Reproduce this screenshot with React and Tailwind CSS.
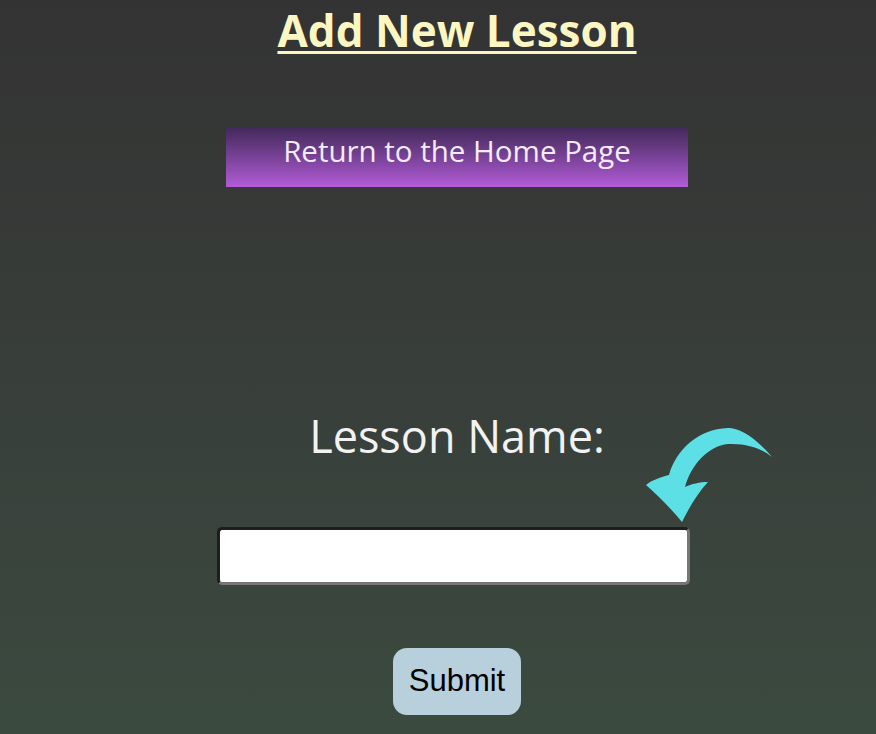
export default function App() {
  return (
    <div className="relative w-[876px] h-[734px] overflow-hidden bg-gradient-to-b from-[#333333] via-[#383e3a] to-[#3b4a3f]" style={{ fontFamily: '"Open Sans", sans-serif' }}>
      <div className="flex flex-col items-center pl-[38px]">
        <h1 className="text-[44px] leading-[60px] -mb-[4px] font-bold text-[#fcf7c2] underline decoration-[3px] underline-offset-[4px]">Add New Lesson</h1>
        <button className="mt-[71px] w-[462px] h-[60px] bg-gradient-to-b from-[#42295a] to-[#b35cd8] text-[#f3ecf8] text-[29.5px] leading-[46px] flex items-start justify-center pt-[1px]">
          Return to the Home Page
        </button>
        <div className="mt-[221px] text-[45px] leading-[56px] text-[#f2f2f2]">Lesson Name:</div>
        <input className="mt-[63px] -ml-[7px] w-[473px] h-[58px] bg-white rounded-[5px] border-t-[3px] border-l-[3px] border-r-[3px] border-b-[3px] border-t-[#1e1e1e] border-l-[#1e1e1e] border-r-[#767676] border-b-[#767676] outline-none" />
        <button className="mt-[63px] w-[128px] h-[67px] rounded-[14px] bg-[#b8d0dc] text-black text-[31px]" style={{ fontFamily: '"Liberation Sans", Arial, sans-serif' }}>Submit</button>
      </div>
      <svg className="absolute left-[640px] top-[425px]" width="140" height="102" viewBox="0 0 140 102">
        <path d="M132,32 C115,12 100,3 88,3 C58,4 36,25 29,50 C21,52 12,55 6,60 C20,72 32,85 42,97 C48,85 56,70 68,57 C60,57 51,59 45,62 C51,40 68,21 88,19 C108,18 122,24 132,32 Z" fill="#5ce0e6" />
      </svg>
    </div>
  );
}
